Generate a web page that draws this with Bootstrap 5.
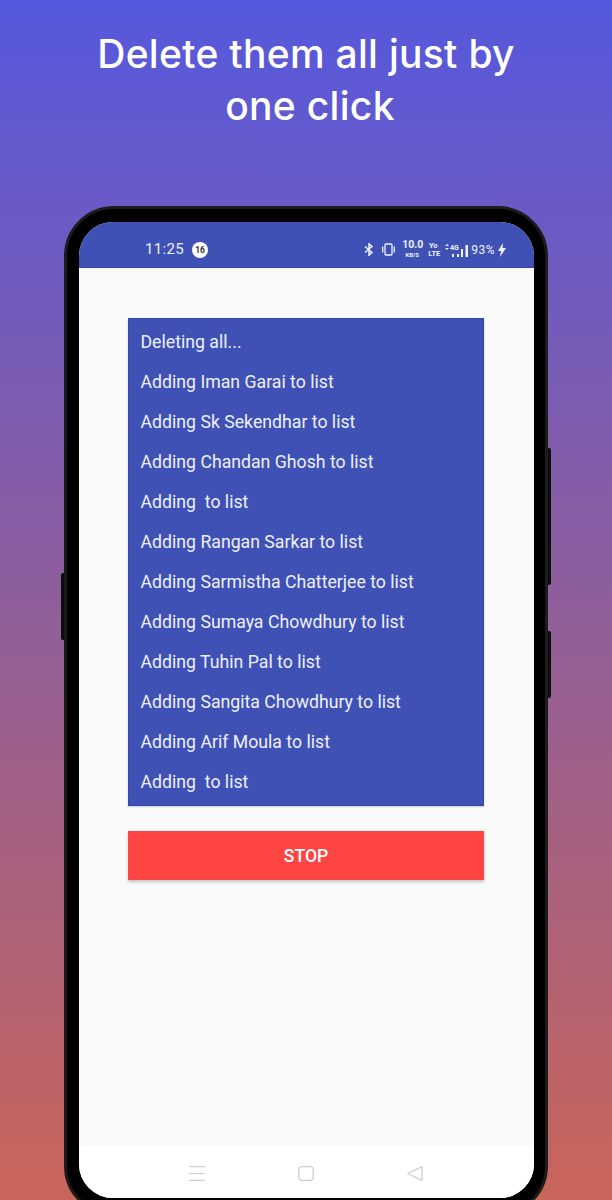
<!DOCTYPE html>
<html lang="en">
<head>
<meta charset="utf-8">
<title>Delete them all</title>
<link rel="stylesheet" href="https://cdn.jsdelivr.net/npm/bootstrap@5.3.0/dist/css/bootstrap.min.css">
<style>
html,body{height:1200px;overflow:hidden}
body{background:linear-gradient(180deg,#5558dd 0%,#c9655a 100%);font-family:Roboto,"Liberation Sans",sans-serif}
.promo-title{font-family:Inter,"Open Sans",sans-serif;font-weight:500;font-size:39px;line-height:52px;padding-top:28px;height:206px;margin:0;color:#fff;letter-spacing:.3px}
.title-tail{padding-left:8px}
.phone-shell{position:relative;width:484px;height:1010px;margin-left:64px;background:#000;border:3px solid #1c1c1c;border-radius:50px;padding:13px 11px 0 12px}
.side-key{position:absolute;width:3px;background:#0d0d0d}
.key-a{right:-6px;top:239px;height:137px;border-radius:0 2px 2px 0}
.key-b{right:-6px;top:422px;height:67px;border-radius:0 2px 2px 0}
.key-c{left:-6px;top:364px;height:67px;border-radius:2px 0 0 2px}
.phone-screen{width:455px;height:976px;background:#fafafa;border-radius:34px;overflow:hidden}
.status-strip{height:46px;background:#3f51b5;color:#f0f1f9;padding:10px 28px 0 66px;border-bottom:1px solid #3346ad}
.clock{font-size:15px;letter-spacing:.35px;line-height:1}
.num-dot{width:16px;height:16px;border-radius:50%;background:#fff;color:#333;font-size:8.5px;font-weight:700;line-height:16px;text-align:center;margin-left:8px}
.rate{font-size:10.5px;font-weight:700;line-height:8px;text-align:center;margin:0 6px 0 7px;width:20px;padding-bottom:1px}
.rate span{display:block;font-size:6px;line-height:7px;margin-top:2px}
.volte{font-size:7.5px;font-weight:700;line-height:8px;text-align:center;margin-right:7px;width:10px}
.pct{font-size:12px;letter-spacing:.5px;margin:0 3px 0 3px}
.page-area{height:878px;padding:50px 50px 0 49px}
.log-panel{background:#3f51b5;border:1px solid #3346ad;border-radius:0;box-shadow:0 1px 2px rgba(0,0,0,.18);padding:3px 0;margin-bottom:25px}
.log-panel .list-group-item{background:transparent;border:0;color:#eef0f9;font-size:17.7px;line-height:40px;padding:0 12px 0 11.500px;white-space:pre;border-radius:0}
.stop-btn{background:#ff4444;color:#fff;border:0;border-radius:0;height:49px;font-size:17.6px;font-weight:500;padding-top:8px;box-shadow:0 2px 3px rgba(0,0,0,.22)}
.stop-btn:hover{background:#ff4444;color:#fff}
.nav-strip{height:52px;background:#fff;padding:20px 2px 0 0;gap:93px}
.nav-strip svg{display:block}
.net-label{font:700 7px Roboto,sans-serif}
</style>
</head>
<body>
<h1 class="promo-title text-center">Delete them all just by<br><span class="title-tail">one click</span></h1>
<div class="phone-shell">
  <span class="side-key key-a"></span><span class="side-key key-b"></span><span class="side-key key-c"></span>
  <div class="phone-screen d-flex flex-column">
    <div class="status-strip d-flex align-items-center">
      <span class="clock">11:25</span>
      <span class="num-dot">16</span>
      <div class="ms-auto d-flex align-items-center">
        <svg width="10" height="13" viewBox="0 0 10 13" fill="none" stroke="#f0f1f9" stroke-width="1.5"><path d="M1 3.500l7 6-3 2.600V.9l3 2.600-7 6"/></svg>
        <svg class="ms-2" width="13" height="13" viewBox="0 0 13 13" fill="none" stroke="#f0f1f9" stroke-width="1.3"><rect x="3" y="1" width="7" height="11" rx="1"/><path d="M.7 3.500v6M12.300 3.500v6"/></svg>
        <div class="rate">10.0<span>KB/S</span></div>
        <div class="volte">Yo<br>LTE</div>
        <svg width="23" height="14" viewBox="0 0 23 14" fill="#f0f1f9"><path d="M2 1l2 2H0zM2 7l2-2H0z"/><text class="net-label" x="5" y="7">4G</text><rect x="7" y="11" width="2" height="3"/><rect x="12" y="11" width="2" height="3"/><rect x="16" y="6" width="2" height="8"/><rect x="20.500" y="2" width="2.500" height="12"/></svg>
        <span class="pct">93%</span>
        <svg width="8" height="14" viewBox="0 0 8 14" fill="#f0f1f9"><path d="M5 0L0 8h3l-1 6 6-9H4.600z"/></svg>
      </div>
    </div>
    <div class="page-area">
      <ul class="list-group log-panel">
        <li class="list-group-item">Deleting all...</li>
        <li class="list-group-item">Adding Iman Garai to list</li>
        <li class="list-group-item">Adding Sk Sekendhar to list</li>
        <li class="list-group-item">Adding Chandan Ghosh to list</li>
        <li class="list-group-item">Adding  to list</li>
        <li class="list-group-item">Adding Rangan Sarkar to list</li>
        <li class="list-group-item">Adding Sarmistha Chatterjee to list</li>
        <li class="list-group-item">Adding Sumaya Chowdhury to list</li>
        <li class="list-group-item">Adding Tuhin Pal to list</li>
        <li class="list-group-item">Adding Sangita Chowdhury to list</li>
        <li class="list-group-item">Adding Arif Moula to list</li>
        <li class="list-group-item">Adding  to list</li>
      </ul>
      <button type="button" class="btn stop-btn w-100">STOP</button>
    </div>
    <div class="nav-strip d-flex justify-content-center align-items-start">
      <svg width="16" height="15" viewBox="0 0 16 15" stroke="#cfcfcf" stroke-width="1.2"><path d="M0 .6h16M0 7.500h16M0 14.400h16"/></svg>
      <svg width="16" height="15" viewBox="0 0 16 15" fill="none" stroke="#cfcfcf" stroke-width="1.3"><rect x=".7" y=".7" width="14.600" height="13.600" rx="3"/></svg>
      <svg width="16" height="15" viewBox="0 0 16 15" fill="none" stroke="#cfcfcf" stroke-width="1.3" stroke-linejoin="round"><path d="M15 .7v13.600L.8 7.500z"/></svg>
    </div>
  </div>
</div>
<script src="https://cdn.jsdelivr.net/npm/bootstrap@5.3.0/dist/js/bootstrap.bundle.min.js"></script>
</body>
</html>
